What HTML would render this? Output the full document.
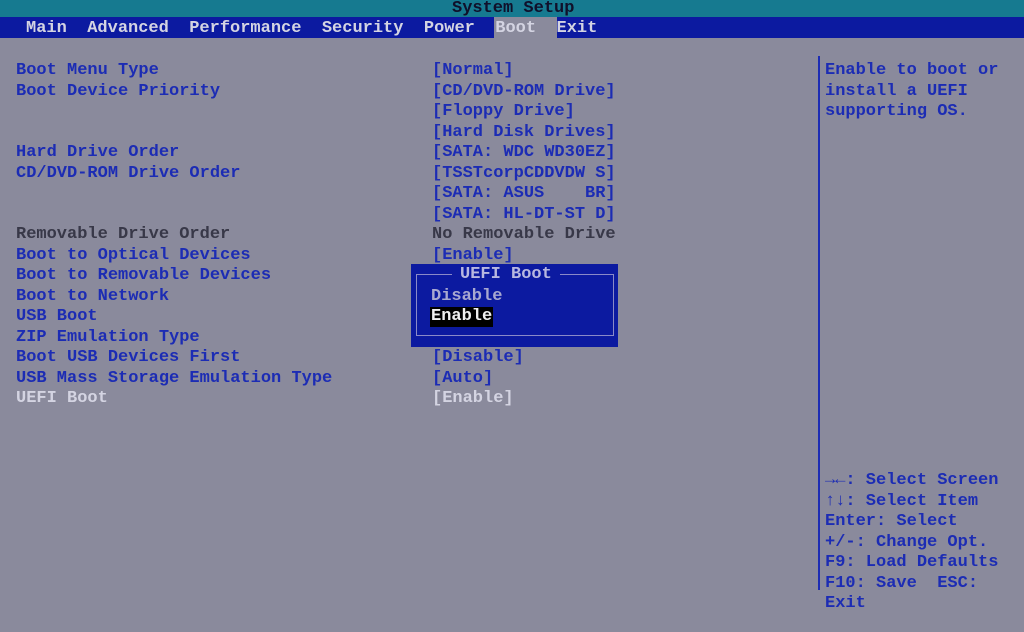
<!DOCTYPE html>
<html><head><style>
*{margin:0;padding:0;box-sizing:border-box}
body{width:1024px;height:632px;overflow:hidden;background:#8a8a9c;font-family:"Liberation Mono",monospace;font-weight:bold;font-size:17px;position:relative}
.t{position:absolute;white-space:pre;line-height:20px;height:20px;margin-top:2px}
.b{color:#1c2cb4}
.w{color:#d4d4e2}
.g{color:#383848}
#top{position:absolute;left:0;top:0;width:1024px;height:17px;background:#167a90}
#menu{position:absolute;left:0;top:17px;width:1024px;height:21px;background:#0c1aa0}
#vl{position:absolute;left:818px;top:56px;width:2px;height:534px;background:#1c2cb4}
#pop{position:absolute;left:411px;top:264px;width:207px;height:83px;background:#0c1aa0}
#pin{position:absolute;left:416px;top:274px;width:198px;height:62px;border:1px solid #8a8ac8}
</style></head><body>
<div id="top"></div>
<div class="t" style="left:452px;top:-3px;color:#10102a">System Setup</div>
<div id="menu"></div>
<div style="position:absolute;left:494px;top:17px;width:63px;height:21px;background:#8a8a9c"></div>
<div class="t w" style="left:26px;top:17px">Main  Advanced  Performance  Security  Power  Boot  Exit</div>
<div id="vl"></div>

<div class="t b" style="left:16px;top:59px">Boot Menu Type</div>
<div class="t b" style="left:16px;top:80px">Boot Device Priority</div>
<div class="t b" style="left:16px;top:141px">Hard Drive Order</div>
<div class="t b" style="left:16px;top:162px">CD/DVD-ROM Drive Order</div>
<div class="t g" style="left:16px;top:223px">Removable Drive Order</div>
<div class="t b" style="left:16px;top:244px">Boot to Optical Devices</div>
<div class="t b" style="left:16px;top:264px">Boot to Removable Devices</div>
<div class="t b" style="left:16px;top:285px">Boot to Network</div>
<div class="t b" style="left:16px;top:305px">USB Boot</div>
<div class="t b" style="left:16px;top:326px">ZIP Emulation Type</div>
<div class="t b" style="left:16px;top:346px">Boot USB Devices First</div>
<div class="t b" style="left:16px;top:367px">USB Mass Storage Emulation Type</div>
<div class="t w" style="left:16px;top:387px">UEFI Boot</div>

<div class="t b" style="left:432px;top:59px">[Normal]</div>
<div class="t b" style="left:432px;top:80px">[CD/DVD-ROM Drive]</div>
<div class="t b" style="left:432px;top:100px">[Floppy Drive]</div>
<div class="t b" style="left:432px;top:121px">[Hard Disk Drives]</div>
<div class="t b" style="left:432px;top:141px">[SATA: WDC WD30EZ]</div>
<div class="t b" style="left:432px;top:162px">[TSSTcorpCDDVDW S]</div>
<div class="t b" style="left:432px;top:182px">[SATA: ASUS    BR]</div>
<div class="t b" style="left:432px;top:203px">[SATA: HL-DT-ST D]</div>
<div class="t g" style="left:432px;top:223px">No Removable Drive</div>
<div class="t b" style="left:432px;top:244px">[Enable]</div>
<div class="t b" style="left:432px;top:346px">[Disable]</div>
<div class="t b" style="left:432px;top:367px">[Auto]</div>
<div class="t w" style="left:432px;top:387px">[Enable]</div>

<div id="pop"></div>
<div id="pin"></div>
<div class="t w" style="left:452px;top:263px;background:#0c1aa0;padding:0 8px;color:#b8b8e0">UEFI Boot</div>
<div class="t" style="left:431px;top:285px;color:#a8a8d0">Disable</div>
<div class="t" style="left:430px;top:305px;color:#f0f0f0;background:#000;padding:0 1px">Enable</div>

<div class="t b" style="left:825px;top:59px">Enable to boot or</div>
<div class="t b" style="left:825px;top:80px">install a UEFI</div>
<div class="t b" style="left:825px;top:100px">supporting OS.</div>

<div class="t b" style="left:825px;top:469px">→←: Select Screen</div>
<div class="t b" style="left:825px;top:490px">↑↓: Select Item</div>
<div class="t b" style="left:825px;top:510px">Enter: Select</div>
<div class="t b" style="left:825px;top:531px">+/-: Change Opt.</div>
<div class="t b" style="left:825px;top:551px">F9: Load Defaults</div>
<div class="t b" style="left:825px;top:572px">F10: Save  ESC:</div>
<div class="t b" style="left:825px;top:592px">Exit</div>
</body></html>
